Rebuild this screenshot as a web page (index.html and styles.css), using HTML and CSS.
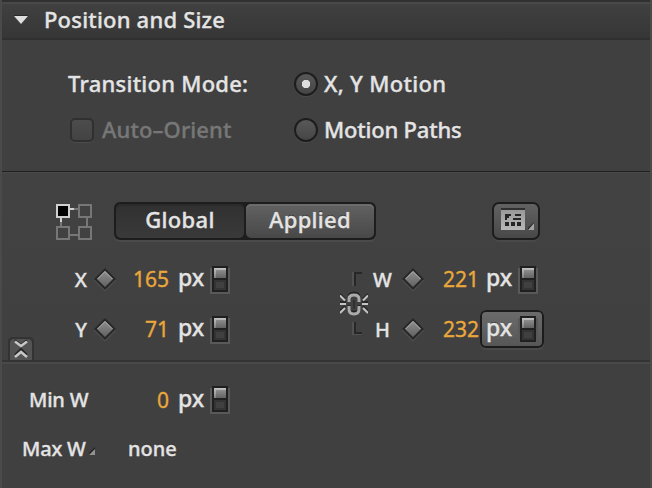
FILE: index.html
```html
<!DOCTYPE html>
<html lang="en">
<head>
<meta charset="utf-8">
<title>Position and Size</title>
<link rel="stylesheet" href="styles.css">
</head>
<body>
<svg width="0" height="0" class="defs">
  <defs>
    <linearGradient id="g" x1="0" y1="0" x2="0" y2="1"><stop offset="0" stop-color="#8d8d8d"/><stop offset="1" stop-color="#626262"/></linearGradient>
    <linearGradient id="l" x1="0" y1="0" x2="0" y2="1"><stop offset="0" stop-color="#c2c2c2"/><stop offset="1" stop-color="#808080"/></linearGradient>
    <linearGradient id="p" x1="0" y1="0" x2="0" y2="1"><stop offset="0" stop-color="#999"/><stop offset="1" stop-color="#b8b8b8"/></linearGradient>
    <symbol id="diamond" viewBox="0 0 24 26">
      <path d="M1 13.500 12 2.500 23 13.500 12 24.500Z" fill="#505050"/>
      <path d="M1 12 12 1 23 12 12 23Z" fill="#282828"/>
      <path d="M4 12 12 4 20 12 12 20Z" fill="url(#g)"/>
      <path d="M4.500 12 12 4.500 19.500 12" fill="none" stroke="#b0b0b0"/>
    </symbol>
    <symbol id="stepper" viewBox="0 0 20 28">
      <path d="M0 2H20V28H0Z" fill="#595959"/>
      <path d="M2 0H18V26H2Z" fill="#202020"/>
      <path d="M4 2H16V12H4Z" fill="url(#l)"/>
      <path d="M6 4H16V12H6Z" fill="url(#g)"/>
      <path d="M4 14H16V24H4Z" fill="#343434"/>
      <path d="M6 16H14V22H6Z" fill="#404040"/>
    </symbol>
  </defs>
</svg>
<main class="panel">
  <header class="header">
    <svg class="arrow" width="14" height="10"><path d="M0 0H14V2H0Z" fill="#292929"/><path d="M0 1H14L7 9Z" fill="#dedede"/></svg>
    <h1 class="title">Position and Size</h1>
  </header>
  <section class="modes">
    <span class="mode-label">Transition Mode:</span>
    <span class="option"><i class="radio on"></i><span class="t-xy">X, Y Motion</span></span>
    <span class="option muted"><i class="check"></i><span class="t-auto">Auto–Orient</span></span>
    <span class="option"><i class="radio"></i><span class="t-paths">Motion Paths</span></span>
  </section>
  <section class="geometry">
    <div class="toolbar">
      <svg class="origin" width="36" height="36" fill="none" stroke-width="2">
        <path d="M18 5H22M31 14V22M14 31H22M5 18V22" stroke="#777"/>
        <path d="M14 5H18M5 14V18" stroke="#cfcfcf"/>
        <path d="M23 1H35V13H23ZM1 23H13V35H1ZM23 23H35V35H23Z" stroke="#777"/>
        <path d="M1 1H13V13H1Z" fill="#000" stroke="#cfcfcf"/>
      </svg>
      <div class="segments"><span class="seg active"><b>Global</b></span><span class="seg"><b>Applied</b></span></div>
      <span class="preset">
        <svg width="44" height="34">
          <path d="M7 4H31V6H7Z" fill="#303030"/><path d="M7 6H31V26H7Z" fill="url(#p)"/>
          <path d="M11 10H17V12H15V14H13V16H11ZM21 10H27V12H21ZM19 14H27V16H19ZM11 18H15V22H11ZM17 18H21V22H17ZM23 18H27V22H23Z" fill="#252525"/>
          <path d="M34 24 40 18V26H34Z" fill="#202020"/><path d="M34 26 40 19V26Z" fill="#a4a4a4"/>
        </svg>
      </span>
    </div>
    <div class="fields">
      <span class="label">X</span><svg class="diamond"><use href="#diamond"/></svg><span class="value left">165</span>
      <span class="unit"><b>px</b><svg class="stepper"><use href="#stepper"/></svg></span>
      <svg class="link" width="28" height="100" fill="none">
        <path d="M22 19H13V32M13 68V80H22" stroke="#515151" stroke-width="2"/>
        <path d="M22 19H15V32M15 68V79H22" stroke="#272727" stroke-width="2"/>
        <path d="M9 47V43.500Q9 39 14 39T19 43.500V47M9 51V55Q9 58 14 58T19 55V51" stroke="#242424" stroke-width="3"/>
        <path d="M9 48V45Q9 41 14 41T19 45V48M9 52V55Q9 60 14 60T19 55V52" stroke="#aaa" stroke-width="3"/>
        <path d="M14 46V55" stroke="#303030" stroke-width="2"/>
        <path d="M0 40 5 45M0 48H6M0 57 5 52M28 40 23 45M28 48H22M28 57 23 52" stroke="#282828" stroke-width="2"/>
        <path d="M0 41.500 5 46.500M0 50H6M0 59 5 54M28 41.500 23 46.500M28 50H22M28 59 23 54" stroke="#c4c4c4" stroke-width="2"/>
      </svg>
      <span class="label right">W</span><svg class="diamond"><use href="#diamond"/></svg><span class="value">221</span>
      <span class="unit"><b>px</b><svg class="stepper"><use href="#stepper"/></svg></span>
      <span class="label">Y</span><svg class="diamond"><use href="#diamond"/></svg><span class="value left">71</span>
      <span class="unit"><b>px</b><svg class="stepper"><use href="#stepper"/></svg></span>
      <span class="label right">H</span><svg class="diamond"><use href="#diamond"/></svg><span class="value">232</span>
      <span class="unit hover"><b>px</b><svg class="stepper"><use href="#stepper"/></svg></span>
    </div>
    <svg class="collapse" width="26" height="25">
      <path d="M0 25V5Q0 0 5 0H21Q26 0 26 5V25Z" fill="#333"/><path d="M2 23V6Q2 2 6 2H20Q24 2 24 6V23Z" fill="#535353"/>
      <path d="M7 3 13 8 19 3M7 18 13 12 19 18" stroke="#252525" stroke-width="2" fill="none"/>
      <path d="M7 4.500 13 9 19 4.500M7 20 13 15 19 20" stroke="#c7c7c7" stroke-width="2.500" fill="none"/>
    </svg>
  </section>
  <section class="limits">
    <div class="limit-row min"><span class="limit-label">Min W</span><span class="value left">0</span><span class="unit"><b>px</b><svg class="stepper"><use href="#stepper"/></svg></span></div>
    <div class="limit-row max"><span class="limit-label">Max W</span><svg class="corner" width="7" height="8"><path d="M0 6 6 0V2L0 8Z" fill="#202020"/><path d="M0 8 6 2V8Z" fill="#929292"/></svg><span class="none">none</span></div>
  </section>
</main>
</body>
</html>
```
FILE: styles.css
```css
* { box-sizing: border-box; }
body { margin: 0; background: #404040; color: #e4e4e4; font: 500 22px/30px "Noto Sans", "Open Sans", sans-serif; white-space: nowrap; overflow: hidden; }
b, h1 { font-weight: 500; margin: 0; font-size: inherit; }
svg { display: block; flex: none; }
.defs { position: absolute; }
.panel { width: 652px; height: 488px; border-left: 2px solid #4a4a4a; border-right: 2px solid #4a4a4a; text-shadow: 0 -1px 0 #2b2b2b; -webkit-text-stroke: 0.35px currentColor; }
.header { height: 40px; display: flex; align-items: center; border-top: 2px solid #303030; border-bottom: 2px solid #303030; box-shadow: inset 0 2px #494949; background: linear-gradient(#414141, #363636); padding-left: 12px; }
.title { margin-left: 16px; line-height: 34px; padding-bottom: 2px; letter-spacing: 0.2px; }
.modes { height: 132px; padding: 21px 0 0 66px; display: grid; grid-template-columns: 226px 1fr; grid-template-rows: 46px 46px; align-items: center; border-bottom: 1px solid #1f1f1f; align-content: start; }
.mode-label, .option span { padding-bottom: 2px; }
.mode-label { letter-spacing: 0.25px; }
.t-xy { letter-spacing: 0.3px; }
.t-auto { letter-spacing: 0.1px; }
.t-paths { letter-spacing: -0.2px; }
.option { display: flex; align-items: center; gap: 6px; }
.muted { color: #777; padding-left: 2px; gap: 8px; text-shadow: none; }
.radio, .check { width: 24px; height: 24px; border: 2px solid #1d1d1d; background: linear-gradient(#585858, #464646); box-shadow: 0 1px #4c4c4c; }
.radio { border-radius: 50%; }
.radio.on { background: radial-gradient(circle, #dedede 0 4px, transparent 4.5px), linear-gradient(#585858, #464646); }
.check { border-color: #303030; border-radius: 5px; background: linear-gradient(#4c4c4c, #434343); }
.geometry { height: 190px; position: relative; border-top: 1px solid #4a4a4a; border-bottom: 2px solid #343434; padding-top: 29px; background: linear-gradient(#424242, #404040); }
.toolbar { display: flex; height: 38px; }
.origin { margin: 2px 22px 0 54px; }
.segments { display: flex; width: 262px; background: #1d1d1d; border-radius: 6px; padding: 2px; gap: 2px; box-shadow: 0 2px #4b4b4b; }
.seg { flex: 1; display: flex; align-items: center; justify-content: center; border-radius: 5px; background: linear-gradient(#626262, #484848); box-shadow: inset 0 2px #6c6c6c; letter-spacing: 0.3px; }
.seg b { padding-bottom: 4px; }
.seg.active { background: linear-gradient(#303030, #3a3a3a); box-shadow: inset 0 2px #2b2b2b; }
.preset { margin-left: 116px; width: 48px; border: 2px solid #1d1d1d; border-radius: 7px; background: linear-gradient(#626262, #484848); box-shadow: 0 2px #494949; }
.fields { margin-top: 14px; display: grid; grid-template-columns: 87px 31px 52px 64px 104px 28px 29px 31px 52px 64px; grid-template-rows: 50px 50px; align-items: center; }
.fields .link { grid-column: 6; grid-row: 1 / 3; }
.label { font-size: 20px; text-align: right; padding: 1px 2px 0 0; }
.label.right { grid-column: 7; text-align: center; padding-right: 0; }
.diamond { width: 24px; height: 26px; justify-self: center; margin-top: 2px; }
.value { color: #eaa73b; font-size: 21px; text-align: right; font-weight: 400; text-shadow: none; padding-right: 1px; }
.value.left { padding-right: 3px; }
.unit { width: 64px; height: 38px; display: flex; align-items: center; padding-left: 6px; border-radius: 6px; }
.unit b { width: 32px; padding-bottom: 5px; font-size: 23px; }
.stepper { width: 20px; height: 28px; margin-top: 2px; }
.unit.hover { background: linear-gradient(#6c6c6c, #555); box-shadow: inset 0 0 0 2px #1c1c1c, 0 2px #4a4a4a; }
.collapse { position: absolute; left: 6px; top: 164px; }
.limits { height: 126px; border-top: 2px solid #494949; padding-top: 12px; }
.limit-row { display: flex; align-items: center; height: 48px; font-size: 20px; }
.min { padding-left: 27px; }
.min .limit-label { width: 91px; letter-spacing: -0.2px; }
.min .value { width: 52px; }
.min .stepper { margin-top: 0; }
.max { padding: 1px 0 0 20px; }
.max .limit-label { width: 67px; letter-spacing: -0.2px; }
.corner { margin: 5px 32px 0 0; }
```
